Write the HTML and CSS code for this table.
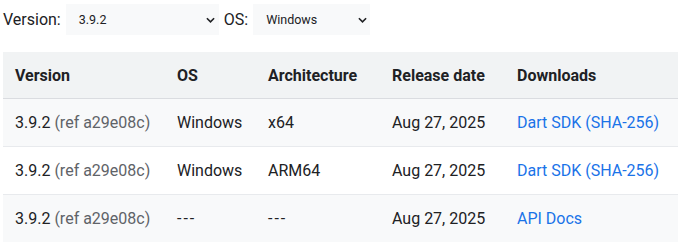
FILE: index.html
```html
<!DOCTYPE html>
<html>
<head>
<meta charset="utf-8">
<link rel="stylesheet" href="styles.css">
</head>
<body>
<div class="filters">
  <label class="lbl">Version:</label>
  <div class="select sel-version"><span>3.9.2</span><svg class="chev" viewBox="0 0 10 6" width="9" height="6"><path d="M1 1l4 4 4-4" fill="none" stroke="#202124" stroke-width="1.8"/></svg></div>
  <label class="lbl">OS:</label>
  <div class="select sel-os"><span>Windows</span><svg class="chev" viewBox="0 0 10 6" width="9" height="6"><path d="M1 1l4 4 4-4" fill="none" stroke="#202124" stroke-width="1.8"/></svg></div>
</div>
<table class="table">
  <thead>
    <tr><th class="c1">Version</th><th class="c2">OS</th><th class="c3">Architecture</th><th class="c4">Release date</th><th class="c5">Downloads</th></tr>
  </thead>
  <tbody>
    <tr class="alt"><td>3.9.2 <span class="ref">(ref a29e08c)</span></td><td>Windows</td><td>x64</td><td>Aug 27, 2025</td><td><a href="#">Dart SDK (SHA-256)</a></td></tr>
    <tr><td>3.9.2 <span class="ref">(ref a29e08c)</span></td><td>Windows</td><td>ARM64</td><td>Aug 27, 2025</td><td><a href="#">Dart SDK (SHA-256)</a></td></tr>
    <tr class="alt"><td>3.9.2 <span class="ref">(ref a29e08c)</span></td><td><span class="dash">---</span></td><td><span class="dash">---</span></td><td>Aug 27, 2025</td><td><a href="#">API Docs</a></td></tr>
  </tbody>
</table>
</body>
</html>
```
FILE: styles.css
```css
body {
  margin: 0;
  padding: 4px 3px;
  font-family: Roboto, "Liberation Sans", Arial, sans-serif;
  color: #1f1f1f;
  background: #fff;
}
.filters {
  display: flex;
  align-items: center;
  height: 31px;
}
.lbl {
  font-size: 16px;
  color: #202124;
  margin-right: 5px;
}
.select {
  display: flex;
  align-items: center;
  justify-content: space-between;
  height: 31px;
  background: #f8f9fa;
  font-size: 12.5px;
  color: #202124;
  padding: 0 4px 0 13px;
  box-sizing: border-box;
  margin-right: 5px;
}
.sel-version { width: 153px; }
.sel-os { width: 117px; padding-left: 13px; padding-right: 3px; }
.chev { display: block; }
.table {
  margin-top: 17px;
  border-collapse: collapse;
  width: 675px;
  font-size: 16px;
}
th {
  background: #f1f3f4;
  text-align: left;
  font-weight: 700;
  height: 46px;
  padding: 0 12px;
  border-bottom: 1px solid #dadce0;
  color: #202124;
}
td {
  height: 47px;
  padding: 0 12px;
  border-bottom: 1px solid #e8eaed;
  color: #202124;
}
tbody tr:last-child td { border-bottom: none; }
.alt td { background: #f8f9fa; }
.c1 { width: 138px; }
.c2 { width: 67px; }
.c3 { width: 100px; }
.c4 { width: 101px; }
.ref { color: #5f6368; }
.dash { letter-spacing: 2px; }
a { color: #1a73e8; text-decoration: none; }
```
